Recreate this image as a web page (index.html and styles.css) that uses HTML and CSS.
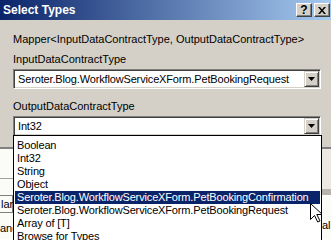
FILE: index.html
```html
<!DOCTYPE html>
<html lang="en">
<head>
  <meta charset="UTF-8" />
  <title>Select Types</title>
  <link rel="stylesheet" href="styles.css">
</head>
<body>

  <!-- TITLE BAR -->
  <div class="titlebar">
    <span class="title">Select Types</span>
    <div class="caption-buttons">
      <span class="cap-btn">?</span>
      <span class="cap-btn">
        <svg width="8" height="7" viewBox="0 0 8 7"><path d="M0 0h2l2 2.5 2-2.5h2l-3 3.5 3 3.5h-2l-2-2.5-2 2.5h-2l3-3.5z" fill="#000"/></svg>
      </span>
    </div>
  </div>

  <!-- DIALOG -->
  <div class="dialog">
    <p class="caption">Mapper&lt;InputDataContractType, OutputDataContractType&gt;</p>

    <label class="field-label">InputDataContractType</label>
    <div class="combo">
      <span class="combo-text">Seroter.Blog.WorkflowServiceXForm.PetBookingRequest</span>
      <span class="combo-btn"><svg width="7" height="4" viewBox="0 0 7 4"><path d="M0 0h7l-3.5 4z" fill="#000"/></svg></span>
    </div>

    <label class="field-label">OutputDataContractType</label>
    <div class="combo">
      <span class="combo-text">Int32</span>
      <span class="combo-btn"><svg width="7" height="4" viewBox="0 0 7 4"><path d="M0 0h7l-3.5 4z" fill="#000"/></svg></span>

      <ul class="dropdown-list">
        <li>Boolean</li>
        <li>Int32</li>
        <li>String</li>
        <li>Object</li>
        <li class="selected">Seroter.Blog.WorkflowServiceXForm.PetBookingConfirmation</li>
        <li>Seroter.Blog.WorkflowServiceXForm.PetBookingRequest</li>
        <li>Array of [T]</li>
        <li>Browse for Types</li>
      </ul>
    </div>
  </div>

  <!-- WINDOW BEHIND THE DIALOG -->
  <div class="backdrop">
    <div class="bd-left">
      <div class="bd-head"></div>
      <div class="bd-cell">lan</div>
      <div class="bd-text">anc</div>
    </div>
    <div class="bd-right">
      <div class="bd-head"></div>
      <div class="bd-band"></div>
      <div class="bd-text">al</div>
    </div>
  </div>

  <!-- mouse pointer -->
  <svg class="cursor" width="12" height="20" viewBox="0 0 12 20">
    <path d="M0.5 0.5v16l4-4 3.2 6.5 2.3-1.1-3.2-6.4h5.6z" fill="#fff" stroke="#000" stroke-width="1" stroke-linejoin="miter"/>
  </svg>

</body>
</html>
```

FILE: styles.css
```css
* {
  box-sizing: border-box;
  margin: 0;
  padding: 0;
}

body {
  position: relative;
  width: 331px;
  height: 240px;
  overflow: hidden;
  font-family: "Liberation Sans", Arial, sans-serif;
  font-size: 11px;
  color: #000;
  background: #fff;
}

/* title bar */
.titlebar {
  height: 20px;
  display: flex;
  align-items: center;
  justify-content: space-between;
  padding: 0 1px 0 3px;
  background: linear-gradient(to right, #0a246a, #a6caf0);
  color: #fff;
}

.title {
  font-weight: bold;
  font-size: 12px;
}

.caption-buttons {
  display: flex;
  gap: 2px;
}

.cap-btn {
  width: 16px;
  height: 14px;
  display: flex;
  align-items: center;
  justify-content: center;
  background: #d4d0c8;
  border: 1px solid;
  border-color: #fff #404040 #404040 #fff;
  box-shadow: inset -1px -1px #808080;
  color: #000;
  font-weight: bold;
  font-size: 12px;
  line-height: 1;
}

/* dialog */
.dialog {
  background: #d4d0c8;
  padding: 13px 10px 11px 13px;
  border-bottom: 2px solid #808080;
}

.caption {
  line-height: 13px;
  margin-bottom: 7px;
  white-space: nowrap;
}

.field-label {
  display: block;
  line-height: 13px;
  margin-bottom: 3px;
}

.combo {
  position: relative;
  height: 20px;
  display: flex;
  align-items: center;
  background: #fff;
  border: 1px solid;
  border-color: #808080 #fff #fff #808080;
  box-shadow: inset 1px 1px #404040, inset -1px -1px #d4d0c8;
  padding: 1px;
  margin-bottom: 11px;
}

.combo:last-child {
  margin-bottom: 0;
}

.combo-text {
  flex: 1;
  padding-left: 3px;
  line-height: 16px;
  letter-spacing: -0.15px;
  white-space: nowrap;
  overflow: hidden;
}

.combo-btn {
  width: 15px;
  height: 16px;
  display: flex;
  align-items: center;
  justify-content: center;
  background: #d4d0c8;
  border: 1px solid;
  border-color: #d4d0c8 #404040 #404040 #d4d0c8;
  box-shadow: inset 1px 1px #fff, inset -1px -1px #808080;
}

/* open list of the second combo */
.dropdown-list {
  position: absolute;
  top: 100%;
  left: -1px;
  width: 309px;
  background: #fff;
  border: 1px solid #000;
  padding: 3px 1px 0;
  list-style: none;
  z-index: 5;
}

.dropdown-list li {
  height: 13px;
  line-height: 13px;
  padding-left: 2px;
  letter-spacing: -0.15px;
  white-space: nowrap;
}

.dropdown-list li.selected {
  background: #0a246a;
  color: #fff;
}

/* window behind */
.backdrop {
  display: flex;
  justify-content: space-between;
  height: 90px;
  background: #fbfbf8;
}

.bd-left {
  width: 13px;
  overflow: hidden;
}

.bd-right {
  width: 9px;
  overflow: hidden;
}

.bd-head {
  height: 30px;
  border-bottom: 1px solid #a0a0a0;
}

.bd-right .bd-head {
  height: 40px;
  background: #ece9e2;
  border-bottom: none;
}

.bd-band {
  height: 6px;
  background: #b8b4ac;
}

.bd-cell {
  margin-top: 16px;
  height: 18px;
  line-height: 16px;
  border: 1px solid #808080;
  border-left: none;
  padding-left: 1px;
  white-space: nowrap;
}

.bd-text {
  margin-top: 9px;
  line-height: 13px;
  white-space: nowrap;
}

.bd-right .bd-text {
  margin-top: 24px;
}

.cursor {
  position: absolute;
  left: 310px;
  top: 203px;
  z-index: 10;
}
```
